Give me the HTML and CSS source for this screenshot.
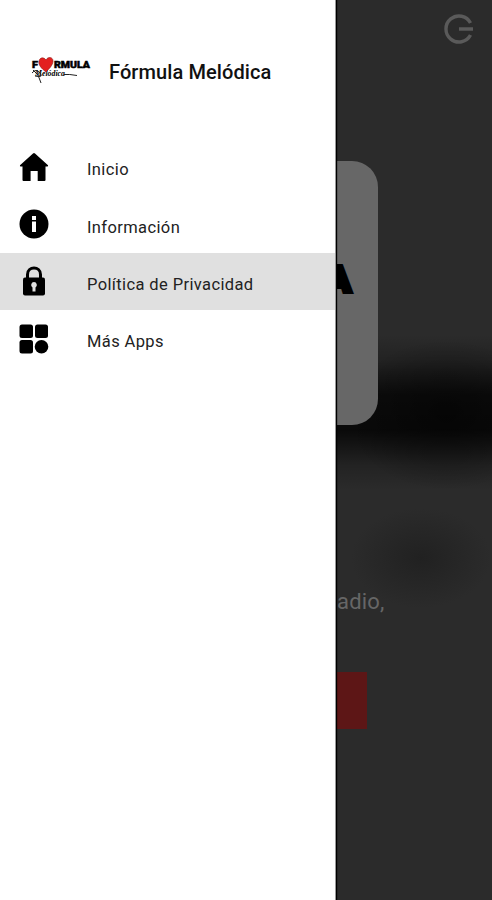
FILE: index.html
```
<!DOCTYPE html>
<html lang="es">
<head>
    <meta charset="UTF-8" />
    <title>Fórmula Melódica</title>
    <link rel="stylesheet" href="styles.css">
</head>
<body>
<aside class="drawer">
    <header class="drawer-header">
        <svg class="logo" width="62" height="30" viewBox="0 0 62 30">
            <text class="logo-name" x="2" y="11" textLength="6" lengthAdjust="spacingAndGlyphs">F</text>
            <text class="logo-name" x="24" y="11" textLength="36" lengthAdjust="spacingAndGlyphs">RMULA</text>
            <text class="logo-script" x="5" y="18.5" textLength="30" lengthAdjust="spacingAndGlyphs">Melódica</text>
            <path d="M16 15 C12 12 8 8 9 4 C10 0 14 0 16 3 C18 -1 23 0 23 4 C23 8 19 12 16 15Z" fill="#e3201f" stroke="#8d1714" stroke-width=".6"/>
            <path d="M3 13 L8 18 L11 26 M2 16 Q6 11 10 16 T5 19 M34 17.5 Q39 17 47 18.5" fill="none" stroke="#222" stroke-width="1"/>
        </svg>
        <h1>Fórmula Melódica</h1>
    </header>
    <nav class="menu">
        <a class="menu-item">
            <svg width="30" height="30" viewBox="0 0 30 30">
                <path d="M15 1 Q15.6 1 16 1.4 L29 13.3 Q29.6 14.5 28 14.5 H26.5 V28 Q26.5 29 25.5 29 H18.7 V19 H11.6 V29 H4.5 Q3.5 29 3.5 28 V14.5 H2 Q.4 14.5 1 13.3 L14 1.4 Q14.4 1 15 1Z"/>
            </svg>
            <span>Inicio</span>
        </a>
        <a class="menu-item">
            <svg width="30" height="30" viewBox="0 0 30 30">
                <circle cx="15" cy="15" r="14.5"/>
                <path d="M13 7h4v4h-4z M13 12.5h4v10.5h-4z" fill="#fff"/>
            </svg>
            <span>Información</span>
        </a>
        <a class="menu-item active">
            <svg width="30" height="30" viewBox="0 0 30 30">
                <path d="M8.5 14 V8.5 C8.5 -.2 21.5 -.2 21.5 8.5 V14" fill="none" stroke="#000" stroke-width="3"/>
                <rect x="4" y="11.5" width="22" height="18" rx="2"/>
                <path d="M15 16 A3 3 0 0 1 16.5 21.5 V25.5 H13.5 V21.5 A3 3 0 0 1 15 16Z" fill="#e0e0e0"/>
            </svg>
            <span>Política de Privacidad</span>
        </a>
        <a class="menu-item">
            <svg width="30" height="30" viewBox="0 0 30 30">
                <rect x="0.5" y="0.5" width="13.5" height="13.5" rx="2.5"/>
                <rect x="16" y="0.5" width="13" height="13.5" rx="2.5"/>
                <rect x="0.5" y="16" width="13.5" height="13.5" rx="2.5"/>
                <circle cx="22.5" cy="22.7" r="6.8"/>
            </svg>
            <span>Más Apps</span>
        </a>
    </nav>
</aside>
<main class="player">
    <div class="toolbar">
        <svg width="32" height="32" viewBox="0 0 32 32">
            <path d="M27.5 10 A13 13 0 1 0 27.5 22 M16 16 H30" fill="none" stroke="#5a5a5a" stroke-width="3.4"/>
        </svg>
    </div>
    <div class="cover"><span>A</span></div>
    <p class="caption">adio,</p>
    <div class="play-button"></div>
</main>
</body>
</html>
```

FILE: styles.css
```
body {
    margin: 0;
    display: flex;
    height: 900px;
    overflow: hidden;
    background-color: #2b2b2b;
    font-family: 'Roboto', sans-serif;
}

.drawer {
    width: 335px;
    background-color: #fff;
    border-right: 1px solid #999;
    box-shadow: 1px 0 1px #000;
    flex: none;
    z-index: 1;
}

.drawer-header {
    display: flex;
    align-items: center;
    height: 143px;
    padding-left: 30px;
    box-sizing: border-box;
    margin-bottom: -5px;
}

.logo-name {
    font: 900 9.5px 'Roboto', sans-serif;
    stroke: #000;
    stroke-width: .5px;
}

.logo-script {
    font: italic 700 9px 'Liberation Serif', serif;
}

h1 {
    margin: 0 0 0 17px;
    font-size: 20px;
    font-weight: 500;
    letter-spacing: .1px;
    color: #111;
}

.menu-item {
    display: flex;
    align-items: center;
    height: 57.4px;
    padding-left: 19px;
    color: #222;
}

.menu-item svg {
    flex: none;
}

.menu-item span {
    margin: 6px 0 0 38px;
    font-size: 16.5px;
    letter-spacing: .38px;
}

.active {
    background-color: #e0e0e0;
}

.player {
    flex: 1;
    background:
        radial-gradient(ellipse 100px 75px at 110px 415px, rgba(0, 0, 0, .5), transparent),
        linear-gradient(transparent 335px, rgba(0, 0, 0, .2) 360px, rgba(0, 0, 0, .72) 395px, rgba(0, 0, 0, .78) 430px, rgba(0, 0, 0, .2) 465px, transparent 490px),
        radial-gradient(ellipse 70px 50px at 85px 558px, #212121, rgba(33, 33, 33, 0)),
        #2b2b2b;
}

.toolbar {
    display: flex;
    justify-content: flex-end;
    height: 148px;
    padding: 13px 17px 0 0;
}

.cover {
    display: flex;
    align-items: center;
    justify-content: flex-end;
    width: 42px;
    height: 264px;
    border-radius: 0 26px 26px 0;
    background-color: #676767;
    overflow: hidden;
}

.cover span {
    margin: -27px 27px 0 0;
    font-size: 37px;
    font-weight: 900;
    line-height: 1;
    color: #000;
    -webkit-text-stroke: 4px #000;
    stroke-linejoin: round;
}

.caption {
    margin: 163px 0 0 1px;
    font-size: 22px;
    line-height: 28px;
    letter-spacing: .2px;
    color: #666;
}

.play-button {
    width: 31px;
    height: 57px;
    margin-top: 56px;
    background-color: #5d1616;
}
```
